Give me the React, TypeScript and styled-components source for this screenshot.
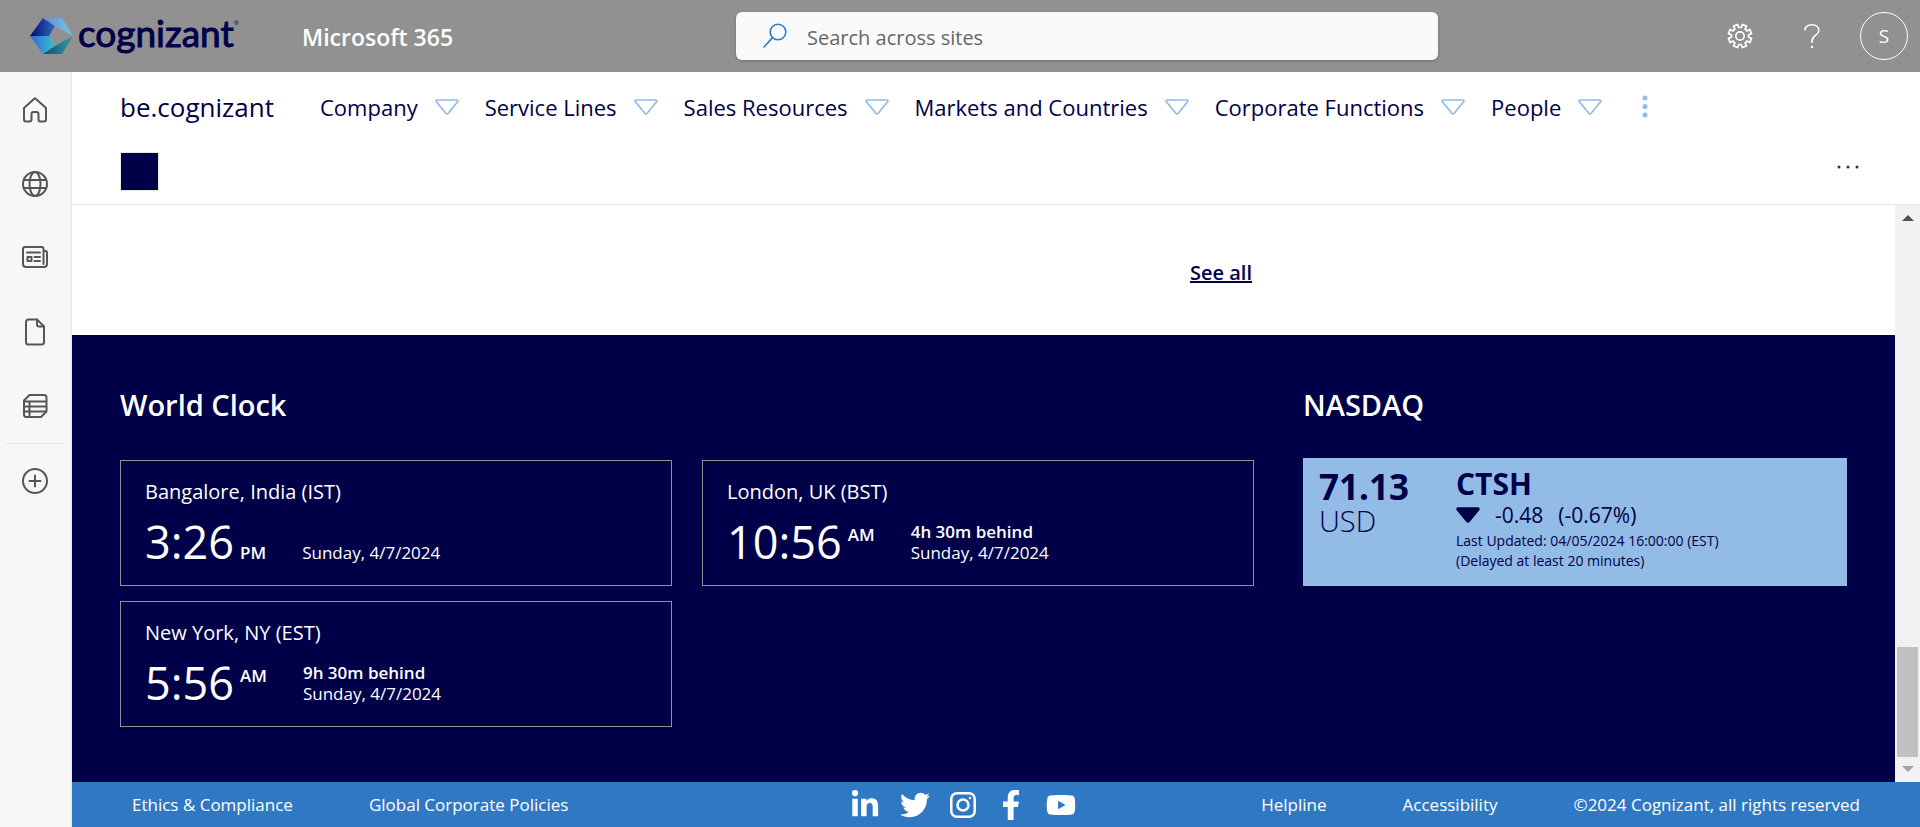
import React from "react";
import styled, { createGlobalStyle } from "styled-components";
import { FaLinkedinIn, FaTwitter, FaFacebookF, FaYoutube } from "react-icons/fa";

const navy = "#000048";
const sky = "#92bbe6";

const GlobalStyle = createGlobalStyle`
  * { box-sizing: border-box; }
  body { margin: 0; background: #fff; color: ${navy}; font-family: "Open Sans", "Noto Sans", sans-serif; }
  h2, p { margin: 0; }
  a { color: inherit; text-decoration: none; }
  button { padding: 0; border: 0; background: none; color: inherit; font: inherit; cursor: pointer; }
  svg { display: block; }
`;

const Page = styled.div`
  min-height: 100vh;
  display: flex;
  flex-direction: column;
`;

const Header = styled.header`
  height: 72px;
  display: grid;
  grid-template-columns: 736px minmax(0, 702px) minmax(0, 1fr);
  align-items: center;
  background: #919191;
  color: #fff;
`;

const Brand = styled.div`
  display: flex;
  align-items: center;
  padding-left: 30px;
`;

const LogoLink = styled.a`
  display: flex;
  align-items: center;
  width: 272px;
  color: ${navy};
`;

const Wordmark = styled.span`
  margin-left: 4px;
  padding-bottom: 6px;
  font: 400 37px/44px Lato, sans-serif;
  -webkit-text-stroke: 1px ${navy};
`;

const Registered = styled.sup`
  align-self: flex-start;
  padding-top: 6px;
  font-size: 6px;
  line-height: 12px;
  color: ${navy};
`;

const Suite = styled.a`
  font-size: 23px;
  line-height: 32px;
  font-weight: 600;
  padding-top: 2px;
`;

const SearchBox = styled.label`
  height: 48px;
  display: flex;
  align-items: center;
  gap: 20px;
  padding: 0 27px;
  border-radius: 6px;
  background: #fafafa;
  box-shadow: 0 1px 3px rgba(0, 0, 0, 0.25);
`;

const SearchInput = styled.input`
  flex: 1;
  min-width: 0;
  border: 0;
  outline: 0;
  padding: 3px 0 0;
  background: none;
  font: 400 20px/28px "Open Sans", sans-serif;
  color: #605e5c;
  &::placeholder { color: #666; opacity: 1; }
`;

const HeaderTools = styled.div`
  display: flex;
  justify-content: flex-end;
  align-items: center;
  padding-right: 12px;
`;

const ToolButton = styled.button`
  width: 72px;
  height: 72px;
  display: grid;
  place-items: center;
`;

const Avatar = styled.button`
  width: 48px;
  height: 48px;
  margin-left: 12px;
  border: 1px solid #fff;
  border-radius: 50%;
  font-size: 19px;
  line-height: 24px;
`;

const Body = styled.div`
  flex: 1;
  display: flex;
`;

const Rail = styled.nav`
  flex: none;
  width: 72px;
  padding-top: 1px;
  padding-right: 1px;
  border-right: 1px solid #e6e6e4;
  background: #f7f7f5;
  color: #54565a;
`;

const RailItem = styled.a`
  height: 74px;
  display: grid;
  place-items: center;
`;

const RailRule = styled.hr`
  margin: 0 6px;
  border: 0;
  border-top: 1px solid #e6e6e4;
`;

const Main = styled.div`
  flex: 1;
  min-width: 0;
  display: flex;
  flex-direction: column;
`;

const SiteHeader = styled.div`
  height: 133px;
  padding: 0 60px 0 48px;
  border-bottom: 1px solid #e8e8e8;
`;

const SiteNav = styled.nav`
  display: flex;
  align-items: center;
  height: 72px;
  padding-bottom: 3px;
  white-space: nowrap;
`;

const SiteName = styled.a`
  width: 200px;
  font-size: 26px;
  line-height: 32px;
`;

const NavButton = styled.button`
  display: flex;
  align-items: center;
  gap: 17px;
  margin-right: 26px;
  font-size: 22px;
  line-height: 32px;
`;

const MoreButton = styled.button`
  margin-left: 14px;
`;

const SiteRow = styled.div`
  display: flex;
  justify-content: space-between;
  padding-top: 8px;
`;

const SiteLogo = styled.a`
  width: 39px;
  height: 39px;
  border: 1px solid #e8e8e8;
  background: ${navy};
`;

const RowMenu = styled.button`
  height: 30px;
`;

const ScrollPane = styled.div`
  flex: 1;
  display: flex;
`;

const Content = styled.main`
  flex: 1;
  min-width: 0;
  display: flex;
  flex-direction: column;
`;

const Columns = styled.div`
  display: grid;
  grid-template-columns: 1134fr 544fr;
  column-gap: 49px;
  padding: 0 48px;
`;

const NewsEnd = styled(Columns)`
  height: 130px;
  align-items: center;
`;

const SeeAll = styled.a`
  justify-self: end;
  padding: 6px 2px 0 0;
  font-size: 20px;
  line-height: 28px;
  font-weight: 600;
  text-decoration: underline;
`;

const Band = styled(Columns)`
  flex: 1;
  padding-top: 50px;
  padding-bottom: 50px;
  background: ${navy};
  color: #fff;
`;

const Heading = styled.h2<{ $tight?: boolean }>`
  margin-bottom: ${(p) => (p.$tight ? 33 : 35)}px;
  font-size: 29px;
  line-height: 40px;
  font-weight: 600;
`;

const Clocks = styled.div`
  display: grid;
  grid-template-columns: 1fr 1fr;
  gap: 15px 30px;
`;

const ClockCard = styled.article`
  height: 126px;
  padding: 17px 24px 0;
  border: 1px solid #919191;
  white-space: nowrap;
`;

const Place = styled.p`
  margin-bottom: 8px;
  font-size: 20px;
  line-height: 28px;
`;

const ClockRow = styled.div`
  display: flex;
  align-items: flex-end;
`;

const Time = styled.span`
  font-size: 45px;
  line-height: 56px;
`;

const Meridiem = styled.span<{ $raised: boolean }>`
  margin: 0 36px 0 6px;
  padding-bottom: ${(p) => (p.$raised ? 25 : 7)}px;
  font-size: 17px;
  line-height: 21px;
  font-weight: 600;
`;

const Day = styled.div`
  padding-bottom: 7px;
  font-size: 17px;
  line-height: 21px;
`;

const Offset = styled.strong`
  display: block;
  font-weight: 600;
`;

const StockCard = styled.article`
  display: flex;
  height: 128px;
  padding: 9px 16px;
  background: ${sky};
  color: ${navy};
  white-space: nowrap;
`;

const Price = styled.div`
  width: 137px;
`;

const PriceValue = styled.p`
  font-size: 35px;
  line-height: 40px;
  font-weight: 700;
`;

const Currency = styled.p`
  font-size: 29px;
  line-height: 28px;
  font-weight: 300;
`;

const Ticker = styled.p`
  font-size: 30px;
  line-height: 34px;
  font-weight: 700;
`;

const Change = styled.p`
  display: flex;
  align-items: center;
  gap: 15px;
  margin-bottom: 2px;
  font-size: 21px;
  line-height: 28px;
`;

const Updated = styled.p`
  font-size: 14px;
  line-height: 20px;
`;

const ScrollBar = styled.div`
  flex: none;
  width: 25px;
  display: flex;
  flex-direction: column;
  align-items: center;
  justify-content: space-between;
  padding: 10px 0;
  background: #f1f1f1;
`;

const ScrollEnd = styled.div`
  width: 21px;
  display: flex;
  flex-direction: column;
  align-items: center;
  gap: 9px;
`;

const Thumb = styled.div`
  width: 21px;
  height: 110px;
  background: #c1c1c1;
`;

const Footer = styled.footer`
  height: 45px;
  display: grid;
  grid-template-columns: 11fr auto 12fr;
  align-items: center;
  padding: 0 60px;
  background: #2f78c4;
  color: #fff;
  font-size: 17px;
  line-height: 24px;
  white-space: nowrap;
`;

const FooterLinks = styled.div<{ $end?: boolean }>`
  display: flex;
  justify-content: ${(p) => (p.$end ? "flex-end" : "flex-start")};
  gap: 76px;
  padding-top: 1px;
`;

const Social = styled.div`
  display: flex;
  align-items: center;
  gap: 20px;
`;

const stroke = { fill: "none", stroke: "currentColor", strokeWidth: 2, strokeLinejoin: "round", strokeLinecap: "round" } as const;

const Logo = () => (
  <svg width="44" height="36" viewBox="0 0 44 36" aria-hidden="true">
    <defs>
      <linearGradient id="lg1" x1="0" x2="1"><stop offset="0" stopColor="#06067e" /><stop offset="1" stopColor="#2e6cb8" /></linearGradient>
      <linearGradient id="lg2" x1="0" x2="1"><stop offset="0" stopColor="#5c90dc" /><stop offset="1" stopColor="#7cc3dc" /></linearGradient>
      <linearGradient id="lg3" x1="0" x2="1"><stop offset="0" stopColor="#3a63cf" /><stop offset="1" stopColor="#2fc3d6" /></linearGradient>
      <linearGradient id="lg4" x1="0" x2="1"><stop offset="0" stopColor="#12506f" /><stop offset="1" stopColor="#2d9aa4" /></linearGradient>
    </defs>
    <path d="M13 0 0 18h19l6-10z" fill="url(#lg1)" />
    <path d="M13 0h19l11 18L25 8z" fill="url(#lg2)" />
    <path d="M0 18h19l6 10-12 8z" fill="url(#lg3)" />
    <path d="m13 36 12-8 18-10-11 18z" fill="url(#lg4)" />
  </svg>
);

// Eight teeth, each described by its two foot points and two tip points.
const gearPath = (() => {
  const pts: string[] = [];
  for (let i = 0; i < 8; i++) {
    const a = 22.5 + i * 45;
    [[-14, 8.6], [-11, 11.8], [11, 11.8], [14, 8.6]].forEach(([d, r]) => {
      const t = ((a + d) * Math.PI) / 180;
      pts.push(`${(13 + r * Math.sin(t)).toFixed(2)} ${(13 - r * Math.cos(t)).toFixed(2)}`);
    });
  }
  return `M${pts.join("L")}Z`;
})();

const Gear = () => (
  <svg width="26" height="26" viewBox="0 0 26 26" {...stroke} strokeWidth={1.7}>
    <path d={gearPath} />
    <circle cx="13" cy="13" r="4.2" />
  </svg>
);

const Question = () => (
  <svg width="16" height="26" viewBox="0 0 16 26" {...stroke} strokeWidth={1.6} strokeLinecap="butt">
    <path d="M1 7.5C1 3.8 4 1.8 8 1.8s6.8 2.2 6.8 5.600c0 5-6.8 5.2-6.8 10.6v2" />
    <circle cx="8" cy="24" r="1.2" fill="currentColor" stroke="none" />
  </svg>
);

const SearchIcon = () => (
  <svg width="24" height="26" viewBox="0 0 24 26" {...stroke} stroke="#2f78c4" strokeWidth={1.6}>
    <circle cx="15" cy="9" r="7.8" />
    <path d="M9.5 14.6 1 24" />
  </svg>
);

const Caret = ({ filled = false }: { filled?: boolean }) => (
  <svg width="24" height="16" viewBox="0 0 24 16" fill={filled ? navy : "none"} stroke={filled ? navy : sky} strokeWidth={1.7} strokeLinejoin="round" aria-hidden="true">
    <path d="M2.2 1h19.6c1 0 1.4 1 .8 1.7L13.2 14.3c-.7.8-1.7.8-2.4 0L1.4 2.7C.8 2 1.2 1 2.2 1z" />
  </svg>
);

const railIcons = [
  { name: "Home", icon: <path d="M3 12 13.5 2.5Q14 2 14.5 2.5L25 12v11.5a2 2 0 0 1-2 2h-3.500a2 2 0 0 1-2-2V18a2 2 0 0 0-2-2h-3a2 2 0 0 0-2 2v5.5a2 2 0 0 1-2 2H5a2 2 0 0 1-2-2z" /> },
  { name: "Sites", icon: <><circle cx="14" cy="14" r="12" /><ellipse cx="14" cy="14" rx="5.5" ry="12" /><path d="M3 10h22M3 18h22" /></> },
  { name: "News", icon: <><path d="M22.5 20V5a2 2 0 0 0-2-2H4a2 2 0 0 0-2 2v15a3 3 0 0 0 3 3h18a3 3 0 0 0 3-3V8.5a1.5 1.5 0 0 0-1.5-1.5h-2" /><path d="M6 8.5h13M13.500 13h5.5M13.500 17h5.5M6.500 13h4v4h-4z" /></> },
  { name: "Files", icon: <><path d="M16 1.5H7.5A2.5 2.5 0 0 0 5 4v20a2.5 2.5 0 0 0 2.5 2.5h13A2.5 2.5 0 0 0 23 24V8.5z" /><path d="M16 1.5v5a2 2 0 0 0 2 2h5" /></> },
  { name: "Lists", icon: <><path d="M3 8.5 8.5 3H23a2.5 2.5 0 0 1 2.5 2.5v14L20 25H5.5A2.5 2.5 0 0 1 3 22.5z" /><path d="M3 9.5h22M3 14.5h22M3 19.5h22M8.500 9.5V25" /></> },
];

const RailIcon = ({ children }: { children: React.ReactNode }) => (
  <svg width="28" height="28" viewBox="0 0 28 28" {...stroke}>{children}</svg>
);

const navItems = ["Company", "Service Lines", "Sales Resources", "Markets and Countries", "Corporate Functions", "People"];

const clocks = [
  { place: "Bangalore, India (IST)", time: "3:26", half: "PM", offset: "" },
  { place: "London, UK (BST)", time: "10:56", half: "AM", offset: "4h 30m behind" },
  { place: "New York, NY (EST)", time: "5:56", half: "AM", offset: "9h 30m behind" },
];

export default function App() {
  return (
    <Page>
      <GlobalStyle />
      <Header>
        <Brand>
          <LogoLink href="#">
            <Logo />
            <Wordmark>cognizant</Wordmark>
            <Registered>®</Registered>
          </LogoLink>
          <Suite href="#">Microsoft 365</Suite>
        </Brand>
        <SearchBox>
          <SearchIcon />
          <SearchInput type="search" placeholder="Search across sites" aria-label="Search across sites" />
        </SearchBox>
        <HeaderTools>
          <ToolButton aria-label="Settings"><Gear /></ToolButton>
          <ToolButton aria-label="Help"><Question /></ToolButton>
          <Avatar aria-label="Account">S</Avatar>
        </HeaderTools>
      </Header>
      <Body>
        <Rail>
          {railIcons.map((item) => (
            <RailItem key={item.name} href="#" aria-label={item.name}>
              <RailIcon>{item.icon}</RailIcon>
            </RailItem>
          ))}
          <RailRule />
          <RailItem href="#" aria-label="Create">
            <RailIcon><circle cx="14" cy="14" r="12" /><path d="M14 8.5v11M8.5 14h11" /></RailIcon>
          </RailItem>
        </Rail>
        <Main>
          <SiteHeader>
            <SiteNav>
              <SiteName href="#">be.cognizant</SiteName>
              {navItems.map((name) => (
                <NavButton key={name}>{name}<Caret /></NavButton>
              ))}
              <MoreButton aria-label="More">
                <svg width="6" height="24" viewBox="0 0 6 24" fill={sky}>
                  <circle cx="3" cy="3" r="2.5" /><circle cx="3" cy="11.5" r="2.5" /><circle cx="3" cy="20" r="2.5" />
                </svg>
              </MoreButton>
            </SiteNav>
            <SiteRow>
              <SiteLogo href="#" aria-label="Site home" />
              <RowMenu aria-label="Site actions">
                <svg width="24" height="4" viewBox="0 0 24 4" fill="#333">
                  <circle cx="3" cy="2" r="1.5" /><circle cx="12" cy="2" r="1.5" /><circle cx="21" cy="2" r="1.5" />
                </svg>
              </RowMenu>
            </SiteRow>
          </SiteHeader>
          <ScrollPane>
            <Content>
              <NewsEnd>
                <SeeAll href="#">See all</SeeAll>
              </NewsEnd>
              <Band>
                <section>
                  <Heading>World Clock</Heading>
                  <Clocks>
                    {clocks.map((c) => (
                      <ClockCard key={c.place}>
                        <Place>{c.place}</Place>
                        <ClockRow>
                          <Time>{c.time}</Time>
                          <Meridiem $raised={!!c.offset}>{c.half}</Meridiem>
                          <Day>
                            {c.offset && <Offset>{c.offset}</Offset>}
                            Sunday, 4/7/2024
                          </Day>
                        </ClockRow>
                      </ClockCard>
                    ))}
                  </Clocks>
                </section>
                <section>
                  <Heading $tight>NASDAQ</Heading>
                  <StockCard>
                    <Price>
                      <PriceValue>71.13</PriceValue>
                      <Currency>USD</Currency>
                    </Price>
                    <div>
                      <Ticker>CTSH</Ticker>
                      <Change><Caret filled /><span>-0.48</span><span>(-0.67%)</span></Change>
                      <Updated>Last Updated: 04/05/2024 16:00:00 (EST)</Updated>
                      <Updated>(Delayed at least 20 minutes)</Updated>
                    </div>
                  </StockCard>
                </section>
              </Band>
            </Content>
            <ScrollBar aria-hidden="true">
              <svg width="12" height="6" viewBox="0 0 12 6" fill="#505050"><path d="M6 0 12 6H0z" /></svg>
              <ScrollEnd>
                <Thumb />
                <svg width="12" height="6" viewBox="0 0 12 6" fill="#a3a3a3"><path d="M0 0h12L6 6z" /></svg>
              </ScrollEnd>
            </ScrollBar>
          </ScrollPane>
          <Footer>
            <FooterLinks>
              <a href="#">Ethics &amp; Compliance</a>
              <a href="#">Global Corporate Policies</a>
            </FooterLinks>
            <Social>
              <a href="#" aria-label="LinkedIn"><FaLinkedinIn size={30} /></a>
              <a href="#" aria-label="Twitter"><FaTwitter size={30} /></a>
              <a href="#" aria-label="Instagram">
                <svg width="26" height="26" viewBox="0 0 26 26" fill="none" stroke="#fff" strokeWidth="2.5">
                  <rect x="1.3" y="1.3" width="23.4" height="23.4" rx="5.5" />
                  <circle cx="13" cy="13" r="5.5" />
                  <circle cx="20" cy="6" r="1.2" fill="#fff" stroke="none" />
                </svg>
              </a>
              <a href="#" aria-label="Facebook"><FaFacebookF size={30} /></a>
              <a href="#" aria-label="YouTube"><FaYoutube size={30} /></a>
            </Social>
            <FooterLinks $end>
              <a href="#">Helpline</a>
              <a href="#">Accessibility</a>
              <span>©2024 Cognizant, all rights reserved</span>
            </FooterLinks>
          </Footer>
        </Main>
      </Body>
    </Page>
  );
}
